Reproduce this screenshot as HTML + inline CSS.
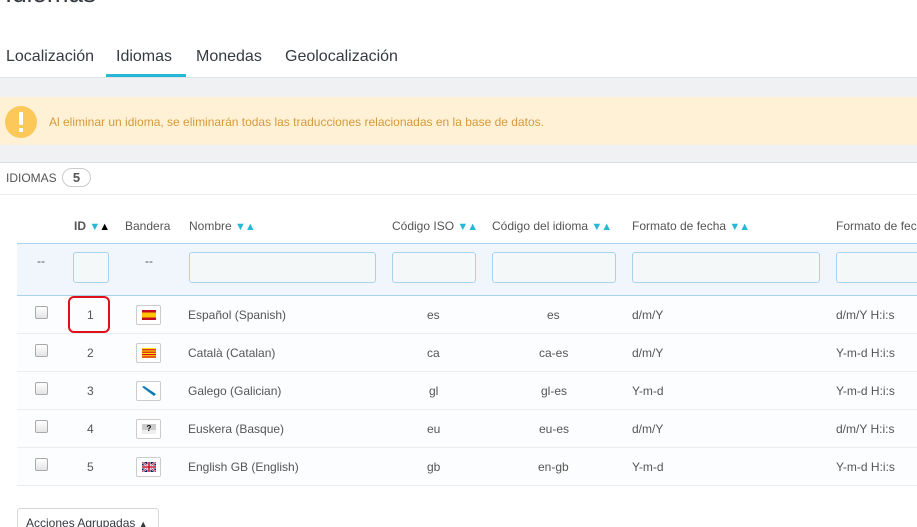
<!DOCTYPE html>
<html><head><meta charset="utf-8">
<style>
*{box-sizing:border-box;margin:0;padding:0}
html,body{width:917px;height:527px;overflow:hidden}
body{background:#fff;font-family:"Liberation Sans",sans-serif;color:#555;font-size:12px}
#w{position:relative;width:917px;height:527px;overflow:hidden}
.a{position:absolute;white-space:nowrap}
.tab{position:absolute;top:48px;font-size:16px;color:#363a41;white-space:nowrap}
.inp{position:absolute;top:252px;height:31px;border:1px solid #a8d3ef;border-radius:3px;background:#f5f8f9}
.row{position:absolute;left:17px;width:900px;height:38px;border-bottom:1px solid #e9edf0;background:#fcfdfe;overflow:hidden}
.cb{position:absolute;left:18px;top:10px;width:13px;height:13px;border:1px solid #aaa;border-radius:2px;background:linear-gradient(#fff,#e4e4e4)}
.c{position:absolute;top:12px;font-size:12px;color:#555;white-space:nowrap}
.flag{position:absolute;left:119px;top:9px;width:25px;height:20px;border:1px solid #ccc;border-radius:2px;background:#fff;padding:4px 5px}
.flag svg{display:block;width:14px;height:10px}
.ar{font-size:11px;color:#25b9d7;letter-spacing:-1px}
.h{position:absolute;top:219px;font-size:12px;color:#555;white-space:nowrap}
</style></head><body><div id="w">
<div class="a" style="left:5px;top:-22px;font-size:26px;color:#363a41">Idiomas</div>
<div class="tab" style="left:6px">Localización</div>
<div class="tab" style="left:116px">Idiomas</div>
<div class="tab" style="left:196px">Monedas</div>
<div class="tab" style="left:285px">Geolocalización</div>
<div class="a" style="left:106px;top:74px;width:80px;height:3px;background:#25b9d7"></div>
<div class="a" style="left:0;top:77px;width:917px;height:85px;background:#eff1f2;border-top:1px solid #dfe2e4"></div>
<div class="a" style="left:0;top:97px;width:917px;height:48px;background:#fff1d6"></div>
<div class="a" style="left:5px;top:106px;width:32px;height:32px;border-radius:50%;background:#fcc85a"></div>
<div class="a" style="left:19px;top:112px;width:4px;height:13px;background:#fff;border-radius:1px"></div>
<div class="a" style="left:19px;top:128px;width:4px;height:4px;background:#fff"></div>
<div class="a" style="left:49px;top:115px;font-size:12px;color:#d59a3b">Al eliminar un idioma, se eliminarán todas las traducciones relacionadas en la base de datos.</div>
<div class="a" style="left:0;top:162px;width:917px;height:1px;background:#dcdfe2"></div>
<div class="a" style="left:6px;top:171px;font-size:12px;color:#555">IDIOMAS</div>
<div class="a" style="left:62px;top:168px;width:29px;height:19px;border:1px solid #ccc;border-radius:10px;text-align:center;font-size:13px;font-weight:bold;line-height:17px;color:#555">5</div>
<div class="a" style="left:0;top:194px;width:917px;height:1px;background:#e9ecee"></div>

<div class="h" style="left:74px;font-weight:bold">ID <span class="ar">▼</span><span style="font-size:11px;color:#000">▲</span></div>
<div class="h" style="left:125px">Bandera</div>
<div class="h" style="left:189px">Nombre <span class="ar">▼▲</span></div>
<div class="h" style="left:392px">Código ISO <span class="ar">▼▲</span></div>
<div class="h" style="left:492px">Código del idioma <span class="ar">▼▲</span></div>
<div class="h" style="left:632px">Formato de fecha <span class="ar">▼▲</span></div>
<div class="h" style="left:836px;width:81px;overflow:hidden">Formato de fecha completo</div>

<div class="a" style="left:17px;top:243px;width:900px;height:53px;background:#f0f6fb;border-top:1px solid #a8d3ef;border-bottom:1px solid #a8d3ef"></div>
<div class="a" style="left:37px;top:254px">--</div>
<div class="a" style="left:145px;top:254px">--</div>
<div class="inp" style="left:73px;width:36px"></div>
<div class="inp" style="left:189px;width:187px"></div>
<div class="inp" style="left:392px;width:84px"></div>
<div class="inp" style="left:492px;width:124px"></div>
<div class="inp" style="left:632px;width:188px"></div>
<div class="inp" style="left:836px;width:81px;border-right:none;border-radius:3px 0 0 3px"></div>

<div class="row" style="top:296px"><div class="cb"></div><div class="c" style="left:70px">1</div>
<div class="flag"><svg viewBox="0 0 14 10"><rect width="14" height="10" fill="#c60b1e"/><rect y="2.5" width="14" height="5" fill="#ffc400"/></svg></div>
<div class="c" style="left:171px">Español (Spanish)</div><div class="c" style="left:410px">es</div><div class="c" style="left:530px">es</div><div class="c" style="left:615px">d/m/Y</div><div class="c" style="left:819px">d/m/Y H:i:s</div></div>
<div class="a" style="left:68px;top:296px;width:42px;height:37px;border:2px solid #e0101a;border-radius:6px"></div>

<div class="row" style="top:334px"><div class="cb"></div><div class="c" style="left:70px">2</div>
<div class="flag"><svg viewBox="0 0 14 10"><rect width="14" height="10" fill="#fcdd09"/><rect y="1.2" width="14" height="1.2" fill="#da121a"/><rect y="3.6" width="14" height="1.2" fill="#da121a"/><rect y="6" width="14" height="1.2" fill="#da121a"/><rect y="8.4" width="14" height="1.2" fill="#da121a"/></svg></div>
<div class="c" style="left:171px">Català (Catalan)</div><div class="c" style="left:410px">ca</div><div class="c" style="left:522px">ca-es</div><div class="c" style="left:615px">d/m/Y</div><div class="c" style="left:819px">Y-m-d H:i:s</div></div>

<div class="row" style="top:372px"><div class="cb"></div><div class="c" style="left:70px">3</div>
<div class="flag"><svg viewBox="0 0 14 10"><rect width="14" height="10" fill="#fff"/><path d="M0 1 L2 0 L14 8 L12 10Z" fill="#0a7bb5"/></svg></div>
<div class="c" style="left:171px">Galego (Galician)</div><div class="c" style="left:412px">gl</div><div class="c" style="left:524px">gl-es</div><div class="c" style="left:615px">Y-m-d</div><div class="c" style="left:819px">Y-m-d H:i:s</div></div>

<div class="row" style="top:410px"><div class="cb"></div><div class="c" style="left:70px">4</div>
<div class="flag"><svg viewBox="0 0 14 10"><rect width="14" height="6" fill="#ccc"/><rect y="6" width="14" height="4" fill="#eee"/><text x="7" y="7" font-size="8" font-weight="bold" text-anchor="middle" fill="#000" font-family="Liberation Sans">?</text></svg></div>
<div class="c" style="left:171px">Euskera (Basque)</div><div class="c" style="left:410px">eu</div><div class="c" style="left:522px">eu-es</div><div class="c" style="left:615px">d/m/Y</div><div class="c" style="left:819px">d/m/Y H:i:s</div></div>

<div class="row" style="top:448px"><div class="cb"></div><div class="c" style="left:70px">5</div>
<div class="flag"><svg viewBox="0 0 14 10"><rect width="14" height="10" fill="#012169"/><path d="M0 0L14 10M14 0L0 10" stroke="#fff" stroke-width="2"/><path d="M0 0L14 10M14 0L0 10" stroke="#c8102e" stroke-width=".8"/><path d="M7 0V10M0 5H14" stroke="#fff" stroke-width="3"/><path d="M7 0V10M0 5H14" stroke="#c8102e" stroke-width="1.6"/></svg></div>
<div class="c" style="left:171px">English GB (English)</div><div class="c" style="left:410px">gb</div><div class="c" style="left:521px">en-gb</div><div class="c" style="left:615px">Y-m-d</div><div class="c" style="left:819px">Y-m-d H:i:s</div></div>

<div class="a" style="left:17px;top:508px;width:142px;height:19px;border:1px solid #d3d8db;border-bottom:none;border-radius:3px 3px 0 0;background:#fff"></div>
<div class="a" style="left:26px;top:516px;font-size:12px;color:#363a41">Acciones Agrupadas <span style="font-size:9px">▲</span></div>
</div></body></html>
